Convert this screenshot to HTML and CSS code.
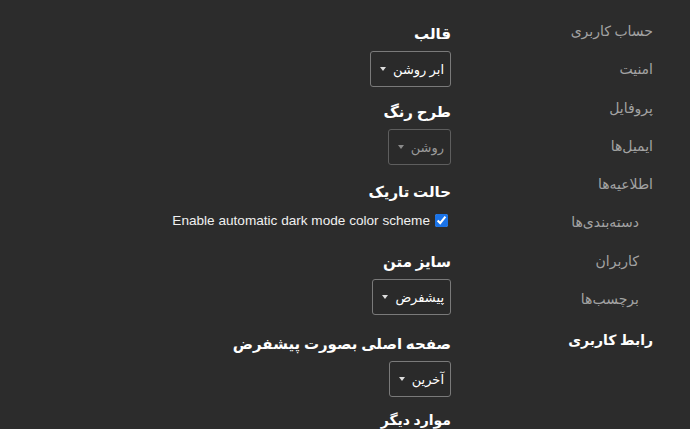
FILE: index.html
```html
<!DOCTYPE html>
<html dir="rtl" lang="fa">
<head>
<meta charset="utf-8">
<link rel="stylesheet" href="styles.css">
</head>
<body>
<div class="page">
  <nav class="side">
    <a class="nav-item">حساب کاربری</a>
    <a class="nav-item">امنیت</a>
    <a class="nav-item">پروفایل</a>
    <a class="nav-item">ایمیل‌ها</a>
    <a class="nav-item">اطلاعیه‌ها</a>
    <a class="nav-item nav-inset">دسته‌بندی‌ها</a>
    <a class="nav-item nav-inset">کاربران</a>
    <a class="nav-item nav-inset">برچسب‌ها</a>
    <a class="nav-item nav-active">رابط کاربری</a>
  </nav>
  <main class="content">
    <section class="group group-theme">
      <h3 class="label">قالب</h3>
      <div class="select"><span class="sel-text">ابر روشن</span><span class="caret"></span></div>
    </section>
    <section class="group group-scheme">
      <h3 class="label">طرح رنگ</h3>
      <div class="select select-disabled"><span class="sel-text">روشن</span><span class="caret"></span></div>
    </section>
    <section class="group group-dark">
      <h3 class="label">حالت تاریک</h3>
      <label class="check"><input class="check-box" type="checkbox" checked><span class="check-text" dir="ltr">Enable automatic dark mode color scheme</span></label>
    </section>
    <section class="group group-size">
      <h3 class="label">سایز متن</h3>
      <div class="select"><span class="sel-text">پیشفرض</span><span class="caret"></span></div>
    </section>
    <section class="group group-home">
      <h3 class="label">صفحه اصلی بصورت پیشفرض</h3>
      <div class="select"><span class="sel-text">آخرین</span><span class="caret"></span></div>
    </section>
    <section class="group">
      <h3 class="label label-small">موارد دیگر</h3>
    </section>
  </main>
</div>
</body>
</html>
```

FILE: styles.css
```css
html, body {
  margin: 0;
  padding: 0;
  background: #2c2c2c;
  height: 100%;
  overflow: hidden;
}
body {
  font-family: Roboto, "DejaVu Sans", sans-serif;
  color: #dddddd;
}
.page {
  display: flex;
  flex-direction: row;
  align-items: flex-start;
}
.side {
  width: 202px;
  flex: 0 0 202px;
  padding: 12px 37px 0 0;
  display: flex;
  flex-direction: column;
  align-items: flex-start;
}
.nav-item {
  display: block;
  font-size: 14px;
  line-height: 38.3px;
  color: #a3a3a3;
}
.nav-inset {
  padding-right: 14px;
}
.nav-active {
  margin-top: 3px;
  color: #ffffff;
  font-weight: bold;
}
.content {
  flex: 1;
  padding-top: 23px;
  display: flex;
  flex-direction: column;
  align-items: flex-start;
}
.group {
  display: flex;
  flex-direction: column;
  align-items: flex-start;
}
.group-theme {
  margin-bottom: 14px;
}
.group-scheme {
  margin-bottom: 16px;
}
.group-dark {
  margin-bottom: 20px;
}
.group-size {
  margin-bottom: 18px;
}
.group-home {
  margin-bottom: 12px;
}
.label {
  margin: 0 0 6px 0;
  font-size: 15px;
  line-height: 22px;
  font-weight: bold;
  color: #ffffff;
}
.label-small {
  font-size: 14px;
}
.select {
  box-sizing: border-box;
  height: 36px;
  display: inline-flex;
  align-items: center;
  gap: 7px;
  padding: 0 6px 0 9px;
  border: 1px solid #7a7a7a;
  border-radius: 3px;
  background: #2a2a2a;
  color: #ffffff;
  font-size: 13px;
}
.caret {
  width: 0;
  height: 0;
  border-left: 3.5px solid transparent;
  border-right: 3.5px solid transparent;
  border-top: 4px solid #dddddd;
}
.select-disabled {
  border-color: #5e5e5e;
  color: #9a9a9a;
}
.select-disabled .caret {
  border-top-color: #8a8a8a;
}
.check {
  display: flex;
  align-items: center;
  gap: 5px;
  height: 22px;
  font-size: 13.6px;
  color: #f0f0f0;
}
.check-box {
  margin: 0 3px 0 0;
  width: 13px;
  height: 13px;
  accent-color: #1a73e8;
}
.check-text {
  font-family: "Liberation Sans", Arial, sans-serif;
}
```
